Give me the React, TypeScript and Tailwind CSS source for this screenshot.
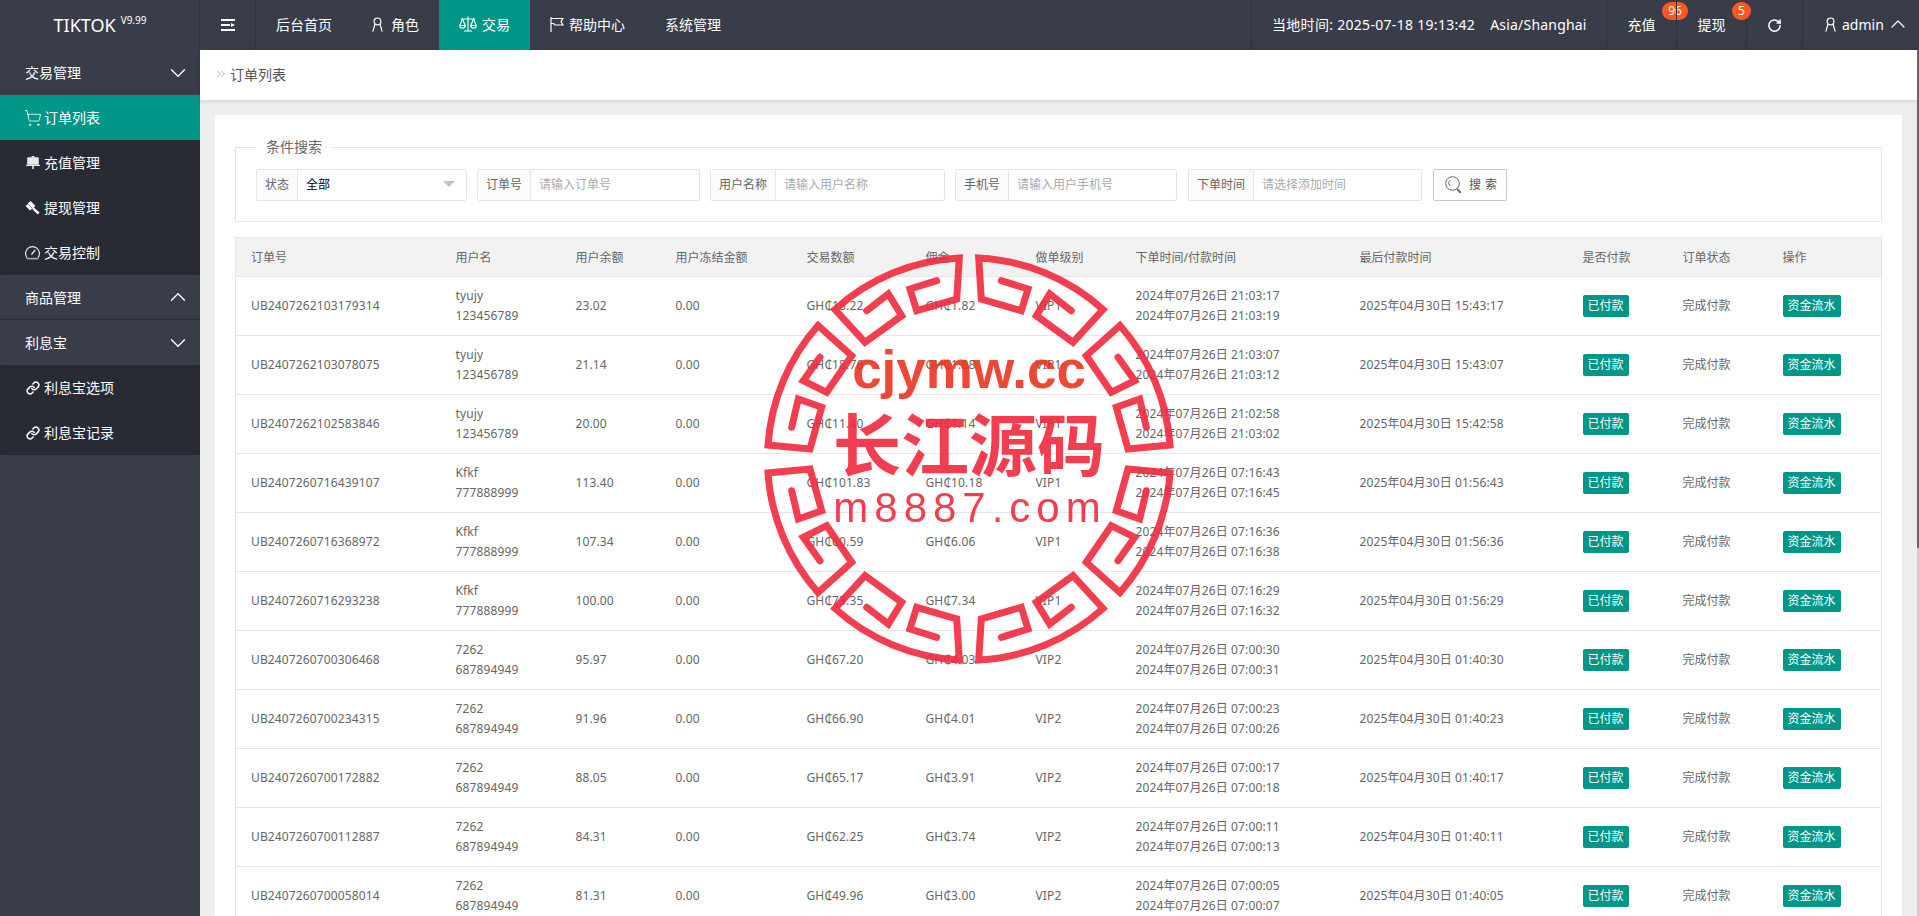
import { ChevronDown, ChevronUp, ChevronsRight, RotateCw, ShoppingCart, Link } from "lucide-react"

const font = "font-['Microsoft_YaHei','Noto_Sans','Noto_Sans_CJK_SC',sans-serif]"

interface Row {
  order: string
  name: string
  phone: string
  balance: string
  amount: string
  commission: string
  level: string
  created: string
  paid: string
  last: string
}

const rows: Row[] = [
  { order: "UB2407262103179314", name: "tyujy", phone: "123456789", balance: "23.02", amount: "GH₵18.22", commission: "GH₵1.82", level: "VIP1", created: "2024年07月26日 21:03:17", paid: "2024年07月26日 21:03:19", last: "2025年04月30日 15:43:17" },
  { order: "UB2407262103078075", name: "tyujy", phone: "123456789", balance: "21.14", amount: "GH₵18.76", commission: "GH₵1.88", level: "VIP1", created: "2024年07月26日 21:03:07", paid: "2024年07月26日 21:03:12", last: "2025年04月30日 15:43:07" },
  { order: "UB2407262102583846", name: "tyujy", phone: "123456789", balance: "20.00", amount: "GH₵11.40", commission: "GH₵1.14", level: "VIP1", created: "2024年07月26日 21:02:58", paid: "2024年07月26日 21:03:02", last: "2025年04月30日 15:42:58" },
  { order: "UB2407260716439107", name: "Kfkf", phone: "777888999", balance: "113.40", amount: "GH₵101.83", commission: "GH₵10.18", level: "VIP1", created: "2024年07月26日 07:16:43", paid: "2024年07月26日 07:16:45", last: "2025年04月30日 01:56:43" },
  { order: "UB2407260716368972", name: "Kfkf", phone: "777888999", balance: "107.34", amount: "GH₵60.59", commission: "GH₵6.06", level: "VIP1", created: "2024年07月26日 07:16:36", paid: "2024年07月26日 07:16:38", last: "2025年04月30日 01:56:36" },
  { order: "UB2407260716293238", name: "Kfkf", phone: "777888999", balance: "100.00", amount: "GH₵73.35", commission: "GH₵7.34", level: "VIP1", created: "2024年07月26日 07:16:29", paid: "2024年07月26日 07:16:32", last: "2025年04月30日 01:56:29" },
  { order: "UB2407260700306468", name: "7262", phone: "687894949", balance: "95.97", amount: "GH₵67.20", commission: "GH₵4.03", level: "VIP2", created: "2024年07月26日 07:00:30", paid: "2024年07月26日 07:00:31", last: "2025年04月30日 01:40:30" },
  { order: "UB2407260700234315", name: "7262", phone: "687894949", balance: "91.96", amount: "GH₵66.90", commission: "GH₵4.01", level: "VIP2", created: "2024年07月26日 07:00:23", paid: "2024年07月26日 07:00:26", last: "2025年04月30日 01:40:23" },
  { order: "UB2407260700172882", name: "7262", phone: "687894949", balance: "88.05", amount: "GH₵65.17", commission: "GH₵3.91", level: "VIP2", created: "2024年07月26日 07:00:17", paid: "2024年07月26日 07:00:18", last: "2025年04月30日 01:40:17" },
  { order: "UB2407260700112887", name: "7262", phone: "687894949", balance: "84.31", amount: "GH₵62.25", commission: "GH₵3.74", level: "VIP2", created: "2024年07月26日 07:00:11", paid: "2024年07月26日 07:00:13", last: "2025年04月30日 01:40:11" },
  { order: "UB2407260700058014", name: "7262", phone: "687894949", balance: "81.31", amount: "GH₵49.96", commission: "GH₵3.00", level: "VIP2", created: "2024年07月26日 07:00:05", paid: "2024年07月26日 07:00:07", last: "2025年04月30日 01:40:05" },
]

function UserIcon() {
  return (
    <svg width="11" height="15" viewBox="0 0 11 15" fill="none" stroke="currentColor" strokeWidth="1.2">
      <circle cx="5.5" cy="4.4" r="3.4" />
      <path d="M3 7 L0.8 14.6 M8 7 L10.2 14.6" />
    </svg>
  )
}

function ScaleIcon() {
  return (
    <svg width="18" height="16" viewBox="0 0 18 16" fill="none" stroke="currentColor" strokeWidth="1.1">
      <path d="M9 0.5 V14.5 M5 15 H13 M2 3 H16" />
      <path d="M3.5 3 L0.8 9.5 H6.2 Z M14.5 3 L11.8 9.5 H17.2 Z" />
      <path d="M0.8 9.5 A2.7 2.7 0 0 0 6.2 9.5 M11.8 9.5 A2.7 2.7 0 0 0 17.2 9.5" />
    </svg>
  )
}

function FlagIcon() {
  return (
    <svg width="14" height="15" viewBox="0 0 14 15" fill="none" stroke="currentColor" strokeWidth="1.2">
      <path d="M1 0 V15" />
      <path d="M1 1.5 H13 L11 4.5 L13 8 H5 L3.6 6.5 H1" />
    </svg>
  )
}

function SearchIcon() {
  return (
    <svg width="17" height="18" viewBox="0 0 17 18" fill="none" stroke="#666" strokeWidth="1">
      <circle cx="7.5" cy="7.5" r="6.8" />
      <path d="M4.6 9.6 A4 4 0 0 1 5 4.2" />
      <path d="M12.2 12.8 L15.6 16.8" strokeWidth="2" />
    </svg>
  )
}

function NavItem({ label, icon, active, gap }: { label: string; icon?: React.ReactNode; active?: boolean; gap?: string }) {
  return (
    <div className={`flex h-full items-center px-5 pb-[2px] ${gap ?? "gap-[5px]"} ${active ? "bg-[#009688]" : ""}`}>
      {icon}
      <span>{label}</span>
    </div>
  )
}

function SideGroup({ label, open, dark }: { label: string; open?: boolean; dark?: boolean }) {
  return (
    <div className={`flex h-[45px] items-center justify-between pl-[25px] pr-[9px] ${dark ? "border-b border-[#2b2e38]" : ""}`}>
      <span>{label}</span>
      {open ? <ChevronDown size={26} strokeWidth={1.2} /> : <ChevronUp size={26} strokeWidth={1.2} />}
    </div>
  )
}

function SideItem({ label, icon, active }: { label: string; icon: React.ReactNode; active?: boolean }) {
  return (
    <div className={`flex h-[45px] items-center gap-[4px] pl-[25px] ${active ? "bg-[#009688]" : ""}`}>
      <span className="flex w-[15px] justify-center">{icon}</span>
      <span>{label}</span>
    </div>
  )
}

function InputGroup({ label, labelWidth, width, placeholder }: { label: string; labelWidth: string; width: string; placeholder: string }) {
  return (
    <div className={`flex h-8 items-stretch rounded-[2px] border border-[#e6e6e6] bg-white ${width}`}>
      <div className={`flex items-center justify-center border-r border-[#e6e6e6] bg-[#fbfbfb] text-[12px] text-[#666] ${labelWidth}`}>{label}</div>
      <div className="flex flex-1 items-center pl-2 text-[12px] text-[#aaa]">{placeholder}</div>
    </div>
  )
}

function Meander() {
  // one upper-left eighth of the seal ring, mirrored round the centre below
  const a = "M-32.3-178.3 L-59-170 L-52.3-148.3 L-12.3-160 L-9.7-201 A201 201 0 0 0 -134-149.5 L-104-116.7 L-67.3-143.3 L-80.7-165 L-102.3-148.3"
  const b = "M-149-101.7 L-165.7-78.3 L-142.3-66.7 L-117.3-103.3 L-151-133.5 A201.5 201.5 0 0 0 -201-14 L-159-10 L-147.3-51.7 L-170.7-60 L-177.3-31.7"
  return (
    <g fill="none" stroke="#f22a3c" strokeWidth="7" strokeLinejoin="miter" strokeLinecap="round">
      {["scale(1 1)", "scale(-1 1)", "scale(1 -1)", "scale(-1 -1)"].map((t) => (
        <g key={t} transform={t}>
          <path d={a} />
          <path d={b} />
        </g>
      ))}
    </g>
  )
}

function Stamp() {
  return (
    <svg className="pointer-events-none absolute left-[759px] top-[249px] opacity-90 blur-[0.4px]" width="420" height="420" viewBox="-210 -210 420 420">
      <Meander />
      <text x="0" y="-71" textAnchor="middle" fill="#ec3420" fontSize="53" fontWeight="700" fontFamily="'Liberation Sans', sans-serif">cjymw.cc</text>
      <text x="0" y="12" textAnchor="middle" fill="#f22a3c" fontSize="68" fontWeight="700" fontFamily="'Noto Sans CJK SC', sans-serif">长江源码</text>
      <text x="1" y="63" textAnchor="middle" fill="#f22a3c" fontSize="42" fontFamily="'Liberation Sans', sans-serif" letterSpacing="6">m8887.com</text>
    </svg>
  )
}

export default function App() {
  return (
    <div className={`relative flex h-screen w-full flex-col overflow-hidden bg-[#eeeeee] ${font}`}>
      {/* top bar */}
      <header className="flex h-[50px] shrink-0 items-center bg-[#393d49] text-[14px] text-white">
        <div className="flex h-full w-[200px] items-center justify-center border-r border-[#2f323c] pl-[1px]">
          <span className="text-[18px] leading-none">TIKTOK</span>
          <sup className="ml-[5px] text-[10px]">V9.99</sup>
        </div>
        <div className="flex h-full w-[56px] items-center justify-center border-r border-[#2f323c]">
          <svg width="14" height="12" viewBox="0 0 14 12" fill="white">
            <rect x="0" y="0" width="14" height="2" />
            <rect x="0" y="5" width="9" height="2" />
            <path d="M10 4 L14 6 L10 8 Z" />
            <rect x="0" y="10" width="14" height="2" />
          </svg>
        </div>
        <NavItem label="后台首页" />
        <NavItem label="角色" icon={<UserIcon />} gap="gap-[8px]" />
        <NavItem label="交易" icon={<ScaleIcon />} active />
        <NavItem label="帮助中心" icon={<FlagIcon />} />
        <NavItem label="系统管理" />
        <div className="flex h-full flex-1 items-center justify-end">
          <div className="flex h-full w-[355px] items-center border-l border-[#2f323c] pb-[2px] pl-5">
            <span className="tracking-[0.3px]">当地时间: 2025-07-18 19:13:42</span>
            <span className="ml-[15px] tracking-[0.2px]">Asia/Shanghai</span>
          </div>
          <div className="relative flex h-full w-[70px] items-center justify-center border-l border-[#2f323c] pb-[2px]">
            充值
            <span className="absolute left-[55px] top-[2px] flex h-[18px] w-[26px] items-center justify-center rounded-full bg-[#ff5722] text-[12px] leading-none">96</span>
          </div>
          <div className="relative flex h-full w-[70px] items-center justify-center border-l border-[#2f323c] pb-[2px]">
            提现
            <span className="absolute left-[55px] top-[2px] flex h-[18px] w-[19px] items-center justify-center rounded-full bg-[#ff5722] text-[12px] leading-none">5</span>
          </div>
          <div className="flex h-full w-[56px] items-center justify-center border-l border-[#2f323c]">
            <RotateCw size={15} strokeWidth={2.4} />
          </div>
          <div className="flex h-full w-[117px] items-center gap-[6px] border-l border-[#2f323c] pb-[2px] pl-[22px]">
            <UserIcon />
            <span>admin</span>
            <ChevronUp size={24} strokeWidth={1.2} className="-ml-[4px]" />
          </div>
        </div>
      </header>

      <div className="flex min-h-0 flex-1">
        {/* left menu */}
        <aside className="w-[200px] shrink-0 bg-[#393d49] text-[14px] text-white">
          <SideGroup label="交易管理" open />
          <div className="rounded-b-[2px] bg-[#282b33]">
            <SideItem label="订单列表" active icon={<ShoppingCart size={18} strokeWidth={1.1} className="shrink-0" />} />
            <SideItem
              label="充值管理"
              icon={
                <svg width="14" height="13" viewBox="0 0 14 13" fill="#e8e8e8">
                  <rect x="5.5" y="0" width="3" height="1.5" />
                  <rect x="1.2" y="1.2" width="11.6" height="7.6" rx="0.6" />
                  <rect x="0" y="8.8" width="14" height="1.2" />
                  <rect x="6.2" y="10" width="1.6" height="3" />
                </svg>
              }
            />
            <SideItem
              label="提现管理"
              icon={
                <svg width="15" height="15" viewBox="0 0 15 15" fill="white">
                  <path d="M5.5 1 L10.5 6 L7.8 8.4 L2.8 3.6 Z" />
                  <path d="M0.6 6 L3 4 L7.2 8.6 L5 10.4 Z" />
                  <path d="M8.4 7.2 L14.6 12.6 L12.8 14.6 L7 8.8 Z" />
                </svg>
              }
            />
            <SideItem
              label="交易控制"
              icon={
                <svg width="15" height="15" viewBox="0 0 15 15" fill="none" stroke="#e8e8e8" strokeWidth="1.2">
                  <path d="M2 12.6 A6.9 6.9 0 1 1 13 12.6" />
                  <path d="M1.6 13.6 H13.4" stroke="#aaa" strokeWidth="1.6" />
                  <path d="M6.4 9.6 L10.2 5" strokeWidth="1.4" />
                </svg>
              }
            />
          </div>
          <SideGroup label="商品管理" dark />
          <SideGroup label="利息宝" open />
          <div className="rounded-[2px] bg-[#282b33]">
            <SideItem label="利息宝选项" icon={<Link size={14} strokeWidth={2.6} />} />
            <SideItem label="利息宝记录" icon={<Link size={14} strokeWidth={2.6} />} />
          </div>
        </aside>

        {/* main */}
        <main className="relative min-w-0 flex-1">
          <div className="flex h-[50px] items-center gap-[2px] bg-white pb-[2px] pl-[14px] text-[14px] text-[#555] shadow-[0_1px_4px_rgba(0,0,0,0.15)]">
            <ChevronsRight size={14} strokeWidth={1} className="text-[#888]" />
            订单列表
          </div>
          {/* thin page scrollbar */}
          <div className="absolute bottom-0 right-0 top-0 w-[2px] bg-[#cccccc]">
            <div className="h-[498px] bg-[#666666]" />
          </div>

          <section className="ml-[15px] mr-[17px] mt-[15px] bg-white px-5 pt-[25px]">
            <fieldset className="h-[82px] border border-[#e6e6e6] px-5">
              <legend className="px-[10px] text-[14px] leading-none text-[#666]">条件搜索</legend>
              <div className="mt-[15px] flex gap-[10px]">
                <div className="flex h-8 w-[211px] items-stretch rounded-[2px] border border-[#e6e6e6] bg-white">
                  <div className="flex w-[41px] items-center justify-center border-r border-[#e6e6e6] bg-[#fbfbfb] text-[12px] text-[#666]">状态</div>
                  <div className="flex flex-1 items-center justify-between pl-2 pr-[11px] text-[12px] text-black">
                    全部
                    <span className="-mt-[2px] border-x-[6px] border-t-[6px] border-x-transparent border-t-[#c2c2c2]" />
                  </div>
                </div>
                <InputGroup label="订单号" labelWidth="w-[53px]" width="w-[223px]" placeholder="请输入订单号" />
                <InputGroup label="用户名称" labelWidth="w-[65px]" width="w-[235px]" placeholder="请输入用户名称" />
                <InputGroup label="手机号" labelWidth="w-[53px]" width="w-[222px]" placeholder="请输入用户手机号" />
                <InputGroup label="下单时间" labelWidth="w-[65px]" width="ml-[1px] w-[234px]" placeholder="请选择添加时间" />
                <button className="ml-[1px] flex h-8 w-[74px] items-center gap-[7px] rounded-[2px] border border-[#c9c9c9] bg-white pl-[11px] text-[12px] text-[#555]">
                  <SearchIcon />
                  <span className="tracking-[4px]">搜索</span>
                </button>
              </div>
            </fieldset>

            <table className="mt-[15px] w-full table-fixed border-collapse text-left text-[12px] text-[#666]">
              <colgroup>
                <col className="w-[205px]" />
                <col className="w-[120px]" />
                <col className="w-[100px]" />
                <col className="w-[131px]" />
                <col className="w-[119px]" />
                <col className="w-[110px]" />
                <col className="w-[100px]" />
                <col className="w-[224px]" />
                <col className="w-[223px]" />
                <col className="w-[100px]" />
                <col className="w-[100px]" />
                <col />
              </colgroup>
              <thead>
                <tr className="h-[39px] border border-[#e6e6e6] bg-[#f2f2f2]">
                  {["订单号", "用户名", "用户余额", "用户冻结金额", "交易数额", "佣金", "做单级别", "下单时间/付款时间", "最后付款时间", "是否付款", "订单状态", "操作"].map((h) => (
                    <th key={h} className="px-[15px] pt-[1px] font-normal">{h}</th>
                  ))}
                </tr>
              </thead>
              <tbody>
                {rows.map((r) => (
                  <tr key={r.order} className="h-[59px] border border-[#e6e6e6] leading-[20px] tracking-[0.13px]">
                    <td className="px-[15px]">{r.order}</td>
                    <td className="px-[15px]">{r.name}<br />{r.phone}</td>
                    <td className="px-[15px]">{r.balance}</td>
                    <td className="px-[15px]">0.00</td>
                    <td className="px-[15px]">{r.amount}</td>
                    <td className="px-[15px]">{r.commission}</td>
                    <td className="px-[15px]">{r.level}</td>
                    <td className="px-[15px]">{r.created}<br />{r.paid}</td>
                    <td className="px-[15px]">{r.last}</td>
                    <td className="px-[15px]">
                      <span className="inline-flex h-[22px] w-[46px] items-center justify-center rounded-[2px] bg-[#009688] tracking-normal text-white">已付款</span>
                    </td>
                    <td className="px-[15px] tracking-normal">完成付款</td>
                    <td className="px-[15px]">
                      <span className="inline-flex h-[22px] w-[58px] items-center justify-center rounded-[2px] bg-[#009688] tracking-normal text-white">资金流水</span>
                    </td>
                  </tr>
                ))}
              </tbody>
            </table>
          </section>
        </main>
      </div>
      <Stamp />
    </div>
  )
}
